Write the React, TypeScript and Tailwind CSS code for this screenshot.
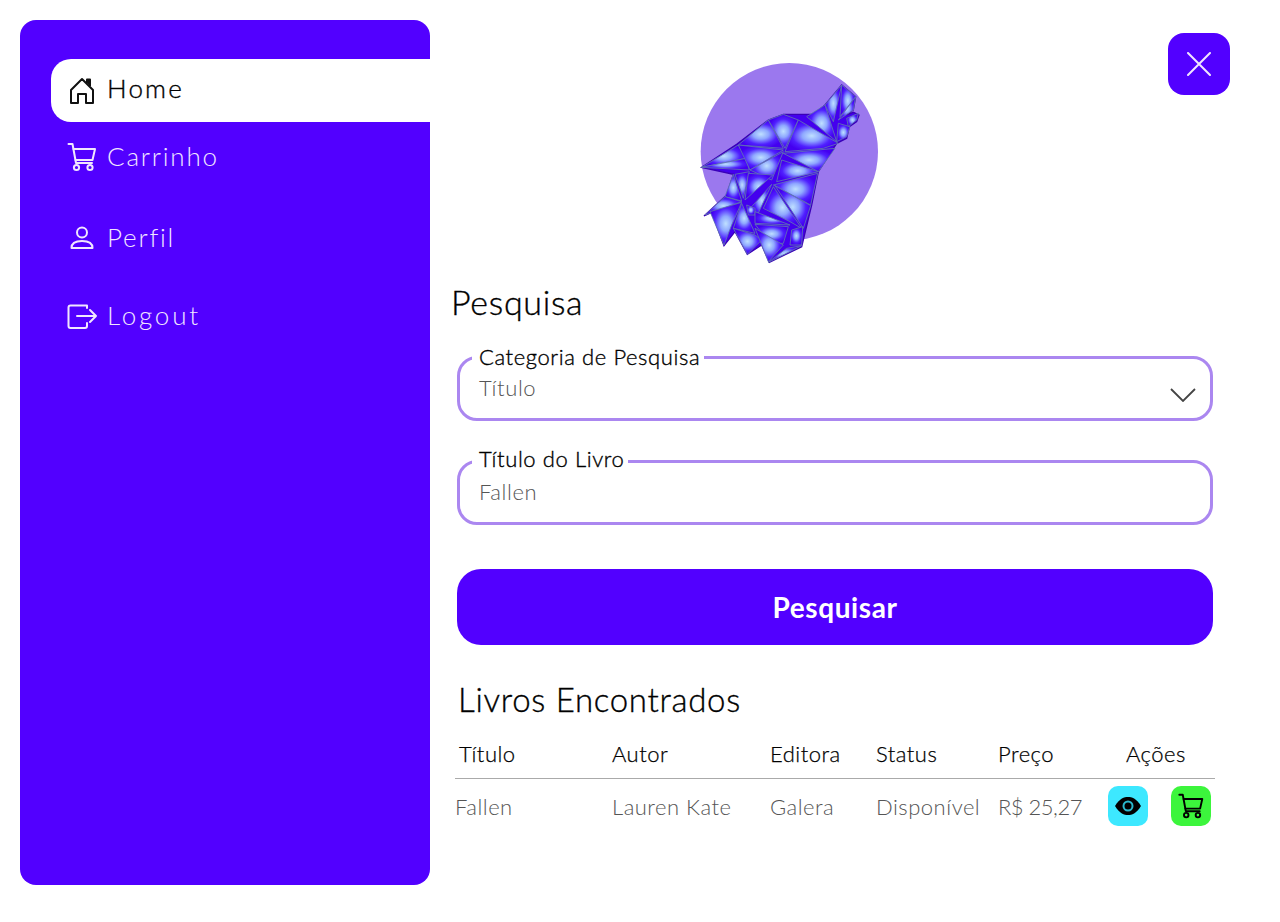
const font = { fontFamily: '"Lato", "Noto Sans", sans-serif' };

// polígonos do logo (coordenadas do viewBox 600x645)
const cells = [
  "35,337 145,270 168,310",
  "35,337 168,310 178,345",
  "145,270 235,195 280,280",
  "145,270 280,285 180,345",
  "235,195 280,178 325,195 285,280",
  "325,195 445,265 400,280 285,290",
  "350,185 405,150 440,260",
  "280,295 435,280 385,350",
  "275,315 385,350 260,380",
  "280,290 180,345 245,375",
  "405,150 455,90 430,200",
  "455,90 497,125 450,185",
  "497,125 490,165 445,195",
  "445,205 480,215 470,245 440,260",
  "470,190 505,175 500,195 475,215",
  "130,358 155,438 105,425",
  "135,358 178,350 160,430",
  "175,355 248,360 165,435",
  "245,388 185,455 200,485",
  "105,425 155,440 45,480",
  "60,470 155,442 125,510 102,570",
  "155,445 195,535 130,520",
  "170,450 195,460 195,480 175,480",
  "130,520 195,540 215,555 172,598",
  "195,470 300,510 195,505",
  "195,508 295,515 280,565 240,565",
  "195,520 280,570 235,620",
  "250,395 335,520 300,500 220,460",
  "250,390 383,355 362,450",
  "255,392 362,452 340,520",
  "305,525 338,515 335,570 300,570",
  "235,622 335,572 290,580",
];

function WolfLogo() {
  return (
    <svg viewBox="0 0 600 645" className="h-[215px] w-[200px]">
      <defs>
        <radialGradient id="cell">
          <stop offset="0%" stopColor="#bfe0ff" />
          <stop offset="35%" stopColor="#8fa8ff" />
          <stop offset="72%" stopColor="#5020ff" />
          <stop offset="100%" stopColor="#4400f0" />
        </radialGradient>
      </defs>
      <circle cx="298" cy="290" r="266" fill="#9b78ee" />
      <polygon
        points="35,337 140,268 235,195 280,178 370,178 405,150 455,90 497,125 490,165 470,180 490,172 507,180 500,200 478,215 470,250 440,265 385,350 365,450 335,575 238,622 215,570 172,598 135,530 102,572 65,472 42,483 110,420 130,358"
        fill="#4400ee"
        stroke="#3a00b8"
        strokeWidth="4"
      />
      {cells.map((points) => (
        <polygon key={points} points={points} fill="url(#cell)" stroke="#6078b0" strokeWidth="2.5" strokeLinejoin="round" />
      ))}
    </svg>
  );
}

function HomeIcon() {
  return (
    <svg viewBox="0 0 30 30" fill="none" stroke="#111" strokeWidth="2" strokeLinejoin="round" className="h-[30px] w-[30px]">
      <path d="M4 14 L15 3 L26 14 V27 H19 V18 H11 V27 H4 Z" />
      <path d="M20 7 V3.5 H23 V10" fill="#111" />
    </svg>
  );
}

function CartIcon({ className, stroke, width }: { className: string; stroke: string; width: number }) {
  return (
    <svg viewBox="0 0 30 30" fill="none" stroke={stroke} strokeWidth={width} strokeLinecap="round" strokeLinejoin="round" className={className}>
      <path d="M1.5 2 H5.5 L9 21 H25" />
      <path d="M6.5 7 H28 L25.5 18 H8.5" />
      <circle cx="9.5" cy="25.5" r="2.6" />
      <circle cx="23" cy="25.5" r="2.6" />
    </svg>
  );
}

function PerfilIcon() {
  return (
    <svg viewBox="0 0 30 30" fill="none" stroke="#f1e6ff" strokeWidth="2" className="h-[30px] w-[30px]">
      <circle cx="15" cy="9.5" r="5" />
      <path d="M4.5 25 C4.5 20 9 18 15 18 C21 18 25.5 20 25.5 25 Z" strokeLinejoin="round" />
    </svg>
  );
}

function LogoutIcon() {
  return (
    <svg viewBox="0 0 30 30" fill="none" stroke="#f1e6ff" strokeWidth="2" strokeLinecap="round" strokeLinejoin="round" className="h-[30px] w-[30px]">
      <path d="M20 7 V4.5 H3.5 A2 2 0 0 0 1.5 6.5 V25 A2 2 0 0 0 3.5 27 H18 A2 2 0 0 0 20 25 V22" />
      <path d="M10 15 H29 M23 9 L29 15 L23 21" />
    </svg>
  );
}

function Field({ label, value, select, labelTop }: { label: string; value: string; select?: boolean; labelTop: string }) {
  return (
    <div className="relative h-[65px] rounded-[20px] border-[3px] border-[#ab87f0]">
      <span className={"absolute left-[12px] bg-white pl-[7px] pr-[4px] text-[22px] font-light leading-[26px] tracking-[0.6px] text-black [-webkit-text-stroke:0.35px_black] " + labelTop}>{label}</span>
      <span className="absolute left-[19px] top-[16px] text-[22px] font-light leading-[26px] tracking-[0.6px] text-[#555]">{value}</span>
      {select && (
        <svg viewBox="0 0 26 14" fill="none" stroke="#444" strokeWidth="1.8" className="absolute right-[14px] top-[29px] h-[14px] w-[26px]">
          <path d="M1 1 L13 13 L25 1" />
        </svg>
      )}
    </div>
  );
}

const nav = [
  { label: "Carrinho", icon: <CartIcon className="h-[30px] w-[30px]" stroke="#f1e6ff" width={2} />, cls: "mt-[20px]", track: "tracking-[1.8px]" },
  { label: "Perfil", icon: <PerfilIcon />, cls: "mt-[51px]", track: "tracking-[1.8px]" },
  { label: "Logout", icon: <LogoutIcon />, cls: "mt-[48px]", track: "tracking-[2.8px]" },
];

const headers = ["Título", "Autor", "Editora", "Status", "Preço"];
const row = ["Fallen", "Lauren Kate", "Galera", "Disponível"];

export default function App() {
  return (
    <div style={font} className="relative flex h-[922px] w-[1280px] overflow-hidden bg-white p-5">
      <aside className="h-[865px] w-[410px] shrink-0 rounded-[16px] bg-[#5200ff] pl-[31px] pt-[39px]">
        <div className="flex h-[63px] items-center gap-[10px] rounded-l-[20px] bg-white pl-[16px]">
          <HomeIcon />
          <span className="-mt-[4px] text-[26px] font-light tracking-[2.2px] text-black [-webkit-text-stroke:0.35px_black]">Home</span>
        </div>
        {nav.map((item) => (
          <div key={item.label} className={"flex h-[30px] items-center gap-[10px] pl-[16px] " + item.cls}>
            {item.icon}
            <span className={"-mt-[2px] text-[26px] font-light text-[#f1e6ff] " + item.track}>{item.label}</span>
          </div>
        ))}
      </aside>

      <main className="ml-[21px] flex-1">
        <div className="ml-[239px] mt-[35px]">
          <WolfLogo />
        </div>
        <h1 className="mt-[12px] text-[34px] font-light leading-[40px] tracking-[0.7px] text-black [-webkit-text-stroke:0.35px_black]">Pesquisa</h1>
        <div className="ml-[6px] w-[756px]">
          <div className="mt-[34px]">
            <Field label="Categoria de Pesquisa" value="Título" select labelTop="-top-[15px]" />
          </div>
          <div className="mt-[39px]">
            <Field label="Título do Livro" value="Fallen" labelTop="-top-[17px]" />
          </div>
          <button className="mt-[44px] h-[76px] w-full rounded-[24px] bg-[#5200ff] text-[28px] font-bold tracking-[0.6px] text-white">Pesquisar</button>
          <h2 className="ml-[1px] mt-[34px] text-[33px] font-light leading-[40px] tracking-[0.7px] text-black [-webkit-text-stroke:0.35px_black]">Livros Encontrados</h2>
        </div>
        <div className="ml-[4px] mt-[15px] w-[760px] text-[22px] font-light tracking-[0.5px]">
          <div className="grid h-[45px] grid-cols-[157px_158px_106px_122px_107px_110px] items-center border-b border-[#aaa] pb-[6px] text-black [-webkit-text-stroke:0.25px_black]">
            {headers.map((h, i) => (
              <span key={h} className={i === 0 ? "pl-[4px]" : ""}>{h}</span>
            ))}
            <span className="pl-[21px]">Ações</span>
          </div>
          <div className="grid h-[54px] grid-cols-[157px_158px_106px_122px_107px_110px] items-center text-[#555]">
            {row.map((c) => (
              <span key={c} className="whitespace-nowrap">{c}</span>
            ))}
            <span className="whitespace-nowrap tracking-[-0.5px]">R$ 25,27</span>
            <div className="flex gap-[23px] pl-[3px]">
              <button className="flex h-10 w-10 items-center justify-center rounded-[10px] bg-[#3de8ff]">
                <svg viewBox="0 0 28 20" className="h-5 w-7">
                  <path d="M1 10 C6 2 10 1 14 1 C18 1 22 2 27 10 C22 18 18 19 14 19 C10 19 6 18 1 10 Z" fill="#000" />
                  <circle cx="14" cy="10" r="5.5" fill="#2ab8cc" />
                  <circle cx="14" cy="10" r="3.5" fill="#000" />
                </svg>
              </button>
              <button className="flex h-10 w-10 items-center justify-center rounded-[10px] bg-[#3cf53c]">
                <CartIcon className="h-[26px] w-[26px]" stroke="#000" width={2.2} />
              </button>
            </div>
          </div>
        </div>
      </main>

      <button className="absolute left-[1168px] top-[33px] flex h-[62px] w-[62px] items-center justify-center rounded-[16px] bg-[#5200ff]">
        <svg viewBox="0 0 24 24" fill="none" stroke="#f1e6ff" strokeWidth="2" strokeLinecap="round" className="h-6 w-6">
          <path d="M1 1 L23 23 M23 1 L1 23" />
        </svg>
      </button>
    </div>
  );
}
